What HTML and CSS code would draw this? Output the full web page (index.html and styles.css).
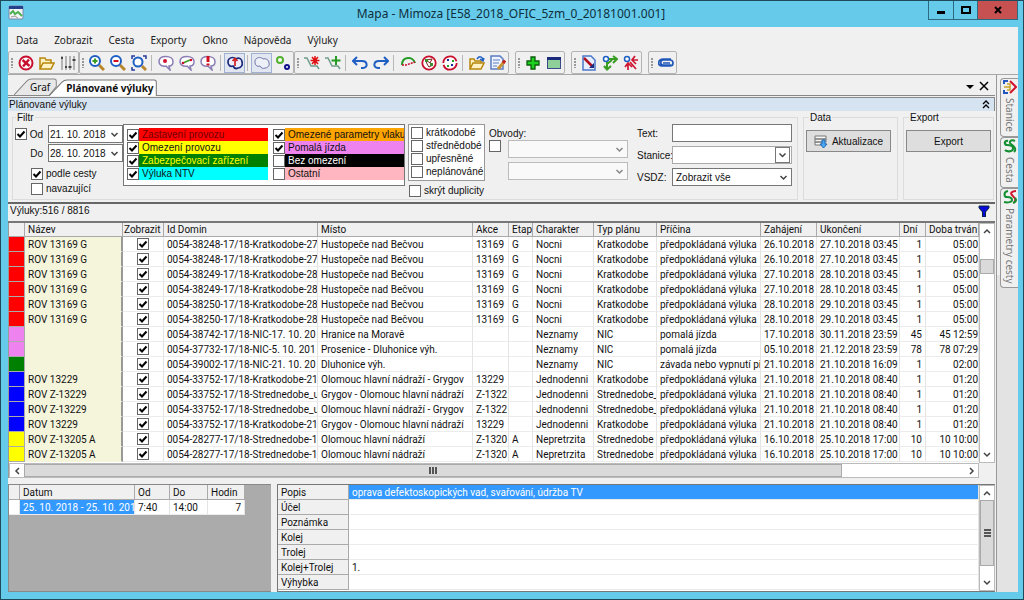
FILE: index.html
```html
<!DOCTYPE html>
<html lang="cs">
<head>
    <meta charset="UTF-8">
    <meta name="viewport" content="width=device-width, initial-scale=1.0">
    <title>Mapa - Mimoza [E58_2018_OFIC_5zm_0_20181001.001]</title>
    <link rel="stylesheet" href="styles.css">
</head>
<body>
<div class="window">

    <header class="titlebar">
        <svg class="app-icon" viewBox="0 0 16 16"><rect x="1" y="1" width="14" height="13" rx="1" fill="#f4f4f4" stroke="#7a86a8"/><path d="M1 1h14v3H1z" fill="#27408b"/><path d="M2 9l3-3 2 3 3-2 4 4" fill="none" stroke="#4caf50" stroke-width="2"/><path d="M3 12l4-1 3 2" fill="none" stroke="#999"/></svg>
        <h1>Mapa - Mimoza [E58_2018_OFIC_5zm_0_20181001.001]</h1>
        <div class="win-buttons">
            <button class="win-min" aria-label="Minimalizovat"><svg viewBox="0 0 10 10"><path d="M1 6h8v3H1z"/></svg></button>
            <button class="win-max" aria-label="Maximalizovat"><svg viewBox="0 0 10 10"><path d="M1 2h8v6H1z" fill="none" stroke="#000" stroke-width="2"/></svg></button>
            <button class="win-close" aria-label="Zavřít"><svg viewBox="0 0 10 10"><path d="M2 2l6 6M8 2l-6 6" stroke="#000" stroke-width="2"/></svg></button>
        </div>
    </header>

    <div class="client">
        <nav class="menu">
            <a href="#">Data</a><a href="#">Zobrazit</a><a href="#">Cesta</a><a href="#">Exporty</a><a href="#">Okno</a><a href="#">Nápověda</a><a href="#">Výluky</a>
        </nav>

        <div class="toolbar">
            <div class="tool-group">
                <span class="grip"></span>
                <button aria-label="Storno"><svg viewBox="0 0 16 16"><circle cx="8" cy="8" r="6.500" fill="#fff" stroke="#c8102e" stroke-width="2"/><path d="M4.500 5l7 6M11 4.500l-6 7" stroke="#c8102e" stroke-width="2.500"/></svg></button>
                <button aria-label="Otevřít"><svg viewBox="0 0 16 16"><path d="M1 14V3h5l1 2h5v3M1 14l3-6h11l-3 6z" fill="#fff3c4" stroke="#b8860b" stroke-width="1.500"/></svg></button>
                <button aria-label="Nastavení"><svg viewBox="0 0 16 16"><path d="M2 1v14M6 1v14M10 1v14M14 1v14" stroke="#777"/><path d="M1 3h2M5 12h2M8.500 12h3M12.500 5h3" stroke="#444" stroke-width="2"/></svg></button>
            </div>
            <div class="tool-group">
                <span class="grip"></span>
                <button aria-label="Přiblížit"><svg viewBox="0 0 16 16"><path d="M10 10l5 5" stroke="#b8862b" stroke-width="3"/><circle cx="6" cy="6" r="5" fill="#fff" stroke="#1f5fc4" stroke-width="2"/><path d="M3.500 6h5M6 3.500v5" stroke="#3a9d23" stroke-width="2"/></svg></button>
                <button aria-label="Oddálit"><svg viewBox="0 0 16 16"><path d="M10 10l5 5" stroke="#b8862b" stroke-width="3"/><circle cx="6" cy="6" r="5" fill="#fff" stroke="#1f5fc4" stroke-width="2"/><path d="M3.500 6h5" stroke="#d01020" stroke-width="2"/></svg></button>
                <button aria-label="Celá mapa"><svg viewBox="0 0 16 16"><path d="M11 11l4 4" stroke="#b8862b" stroke-width="3"/><circle cx="7" cy="7" r="4.500" fill="#fff" stroke="#1f5fc4" stroke-width="2"/><path d="M1 4V1h3M12 1h3v3M1 12v3h3" fill="none" stroke="#223a9a" stroke-width="1.500"/></svg></button>
                <span class="sep"></span>
                <button aria-label="Výběr bodu"><svg viewBox="0 0 16 16"><path d="M9 11C3 12 1 9 1 6.500 1 3 4 1.500 8 1.500s7 2 7 5-2 4.500-4 4.500l1 4-4-4" fill="#fff" stroke="#8c7fb5" stroke-width="1.500"/><circle cx="7" cy="6" r="2" fill="#d01030"/></svg></button>
                <button aria-label="Výběr úseku"><svg viewBox="0 0 16 16"><path d="M9 11C3 12 1 9 1 6.500 1 3 4 1.500 8 1.500s7 2 7 5-2 4.500-4 4.500l1 4-4-4" fill="#fff" stroke="#8c7fb5" stroke-width="1.500"/><path d="M4 8l7-3" stroke="#3a9d23" stroke-width="1.500"/><circle cx="4" cy="8" r="1.300" fill="#d01030"/><circle cx="12" cy="5" r="1.300" fill="#d01030"/></svg></button>
                <button aria-label="Výběr návěsti"><svg viewBox="0 0 16 16"><path d="M9 11C3 12 1 9 1 6.500 1 3 4 1.500 8 1.500s7 2 7 5-2 4.500-4 4.500l1 4-4-4" fill="#fff" stroke="#8c7fb5" stroke-width="1.500"/><path d="M8 1v6M8 8.500v2" stroke="#d01020" stroke-width="3"/></svg></button>
                <span class="sep"></span>
                <button class="pressed" aria-label="Oblast s bodem"><svg viewBox="0 0 16 16"><path d="M2 4c2-2 5-2 7 0 3-2 6 0 6 3 1 3-1 6-4 6-2 1-4 0-5-2-3 1-5-1-5-4 0-1 0-2 1-3z" fill="#eef" stroke="#1b2a7a" stroke-width="1.700"/><path d="M8 11V4M5.500 6L8 3.500 10.500 6" fill="none" stroke="#d02020" stroke-width="1.700"/></svg></button>
                <span class="sep"></span>
                <button class="pressed" aria-label="Oblast"><svg viewBox="0 0 16 16"><path d="M2 4c2-2 5-2 7 0 3-1 6 1 6 4 1 3-2 5-4 5-2 1-4 0-5-2-3 1-5-1-5-4 0-1 0-2 1-3z" fill="#eef0f8" stroke="#6c75a8"/></svg></button>
                <button aria-label="Body"><svg viewBox="0 0 16 16"><circle cx="5" cy="5" r="3" fill="#fff" stroke="#55b030" stroke-width="2"/><circle cx="12" cy="12" r="2" fill="#fff" stroke="#10108c" stroke-width="2"/></svg></button>
            </div>
            <div class="tool-group">
                <span class="grip"></span>
                <button aria-label="Nová trasa"><svg viewBox="0 0 16 16"><path d="M0 3h3l4 8h6l2 3" fill="none" stroke="#6f9c8c" stroke-width="1.500"/><path d="M11 1v9M6.500 5.500h9M8 2l6 7M14 2L8 9" stroke="#e01010" stroke-width="1.500"/></svg></button>
                <button aria-label="Přidat do trasy"><svg viewBox="0 0 16 16"><path d="M0 3h3l4 8h6l2 3" fill="none" stroke="#6f9c8c" stroke-width="1.500"/><path d="M11 1v9M6.500 5.500h9" stroke="#259b25" stroke-width="2"/></svg></button>
                <span class="sep"></span>
                <button aria-label="Zpět"><svg viewBox="0 0 16 16"><path d="M5 2L1 6l4 4M1 6h9c6 0 6 7 1 7H9" fill="none" stroke="#1f5fc4" stroke-width="2"/></svg></button>
                <button aria-label="Znovu"><svg viewBox="0 0 16 16"><path d="M11 2l4 4-4 4M15 6H6c-6 0-6 7-1 7h2" fill="none" stroke="#1f5fc4" stroke-width="2"/></svg></button>
                <span class="sep"></span>
                <button aria-label="Část cesty"><svg viewBox="0 0 16 16"><path d="M2 10c0-9 11-9 13-2" fill="none" stroke="#259b25" stroke-width="2"/><path d="M2 10h4l9-3" fill="none" stroke="#c8102e" stroke-width="1.500" stroke-dasharray="2 1"/></svg></button>
                <button aria-label="Uzly"><svg viewBox="0 0 16 16"><circle cx="8" cy="8" r="6.700" fill="#fff" stroke="#c8102e" stroke-width="1.800"/><path d="M5 5l6-1-2 4 3 2-4 2-2-3zM5 5l4 3" fill="none" stroke="#7a2020"/><path d="M4 4h3v3H4zM9 8h3v3H9z" fill="#3a8d33"/></svg></button>
                <button aria-label="Stanice na cestě"><svg viewBox="0 0 16 16"><circle cx="8" cy="8" r="6.700" fill="#fff" stroke="#c8102e" stroke-width="1.800" stroke-dasharray="19 2"/><path d="M5 4h2v2H5zM9 9h2v2H9z" fill="#1b2a9a"/><path d="M10 5h2v2h-2zM5 10h2v2H5z" fill="#20a020"/></svg></button>
                <span class="sep"></span>
                <button aria-label="Načíst"><svg viewBox="0 0 16 16"><path d="M1 14V4h4l1 2h6v2M1 14l3-6h11l-3 6z" fill="#fff3c4" stroke="#b8860b" stroke-width="1.500"/><path d="M8 4c2-3 5-3 6 1M11 4l3 2 1-3" fill="none" stroke="#1f5fc4" stroke-width="1.500"/></svg></button>
                <button aria-label="Upravit"><svg viewBox="0 0 16 16"><path d="M1 1h9l3 3v10H1z" fill="#eef3ff" stroke="#5b7cc0" stroke-width="1.500"/><path d="M3 5h7M3 8h6M3 11h4" stroke="#5b7cc0"/><path d="M8 14l6-7" stroke="#c99232" stroke-width="3"/><path d="M13 8l2-2.500" stroke="#c02020" stroke-width="3"/></svg></button>
            </div>
            <div class="tool-group apart">
                <span class="grip"></span>
                <button aria-label="Přidat"><svg viewBox="0 0 16 16"><path d="M6 2h4v4h4v4h-4v4H6v-4H2V6h4z" fill="#20d020" stroke="#0b5d0b" stroke-width="1.300"/></svg></button>
                <button aria-label="Okno"><svg viewBox="0 0 16 16"><rect x="1.500" y="2.500" width="13" height="11" fill="#8fd09a" stroke="#3a4a8a"/><path d="M1 2h14v3H1z" fill="#1b2a7a"/></svg></button>
            </div>
            <div class="tool-group apart">
                <span class="grip"></span>
                <button aria-label="Dokument"><svg viewBox="0 0 16 16"><path d="M2 1h8l4 4v10H2z" fill="#e6eeff" stroke="#4c78c8" stroke-width="1.500"/><path d="M3 3l9 9" stroke="#b01020" stroke-width="2.500"/><path d="M13 8v5H8z" fill="#1b2a7a"/></svg></button>
                <button aria-label="Připojit"><svg viewBox="0 0 16 16"><circle cx="4" cy="4" r="2.500" fill="#fff" stroke="#1f5fc4" stroke-width="1.500"/><path d="M7 4h7M11 1l4 3-4 4M5 7v7M2 11l3 3.500L9 11M5 9l5-4" fill="none" stroke="#3a9d23" stroke-width="2"/></svg></button>
                <button aria-label="Odpojit"><svg viewBox="0 0 16 16"><path d="M9 5h6M12 1L9 5l4 4M5 8v7M2 12l3-4 4 4M7 7l6 7" fill="none" stroke="#d01530" stroke-width="1.700"/><circle cx="4" cy="4" r="2.500" fill="#fff" stroke="#1f5fc4" stroke-width="1.500"/></svg></button>
            </div>
            <div class="tool-group apart">
                <span class="grip"></span>
                <button aria-label="Příloha"><svg viewBox="0 0 16 16"><path d="M13 10H5c-3 0-3-5 0-5h7c4 0 4 6 0 6H4c-5 0-4-7 1-7h8M5 8h7" fill="none" stroke="#1f57b8" stroke-width="1.700"/></svg></button>
            </div>
        </div>

        <div class="workspace">
            <main class="document">
                <div class="tabs">
                    <button class="tab tab-graf"><svg viewBox="0 0 44 16" preserveAspectRatio="none"><path d="M0 16L13 3Q15 1 18 1H41Q43 1 43 3V8L36 16" fill="#e8e8e8" stroke="#888"/></svg><span>Graf</span></button>
                    <button class="tab tab-active"><svg viewBox="0 0 108 16" preserveAspectRatio="none"><path d="M0 16L13 3Q15 1 18 1H105Q107 1 107 3V16" fill="#fff" stroke="#777"/></svg><span>Plánované výluky</span></button>
                    <div class="tab-tools">
                        <button aria-label="Seznam oken"><svg viewBox="0 0 10 10"><path d="M1 4h8L5 8z"/></svg></button>
                        <button aria-label="Zavřít okno"><svg viewBox="0 0 10 10"><path d="M1 1l8 8M9 1L1 9" stroke="#000" stroke-width="1.500"/></svg></button>
                    </div>
                </div>

                <div class="panel-title"><span>Plánované výluky</span>
                    <button aria-label="Sbalit"><svg viewBox="0 0 8 10"><path d="M1 5l3-3 3 3M1 9l3-3 3 3" fill="none" stroke="#000" stroke-width="1.300"/></svg></button>
                </div>

                <form class="filter">
                    <fieldset class="box-filter">
                        <legend>Filtr</legend>
                        <div class="dates">
                            <div class="date-row"><label><input type="checkbox" checked>Od</label><input type="text" class="date" value="21. 10. 2018" aria-label="Od"></div>
                            <div class="date-row"><label for="dateTo">Do</label><input type="text" class="date" id="dateTo" value="28. 10. 2018"></div>
                            <label class="date-option"><input type="checkbox" checked>podle cesty</label>
                            <label class="date-option"><input type="checkbox">navazující</label>
                        </div>
                        <div class="kinds">
                            <label><input type="checkbox" checked><span class="kind-stop">Zastavení provozu</span></label>
                            <label><input type="checkbox" checked><span class="kind-limit">Omezení provozu</span></label>
                            <label><input type="checkbox" checked><span class="kind-signal">Zabezpečovací zařízení</span></label>
                            <label><input type="checkbox" checked><span class="kind-ntv">Výluka NTV</span></label>
                            <label><input type="checkbox" checked><span class="kind-params">Omezené parametry vlaku</span></label>
                            <label><input type="checkbox" checked><span class="kind-slow">Pomalá jízda</span></label>
                            <label><input type="checkbox"><span class="kind-none">Bez omezení</span></label>
                            <label><input type="checkbox"><span class="kind-other">Ostatní</span></label>
                        </div>
                        <div class="terms">
                            <div class="term-list">
                                <label><input type="checkbox">krátkodobé</label>
                                <label><input type="checkbox">střednědobé</label>
                                <label><input type="checkbox">upřesněné</label>
                                <label><input type="checkbox">neplánováné</label>
                            </div>
                            <label class="duplicates"><input type="checkbox">skrýt duplicity</label>
                        </div>
                        <div class="districts">
                            <label for="districtOn">Obvody:</label>
                            <div class="district-row"><input type="checkbox" id="districtOn">
                                <div class="district-selects">
                                    <select disabled aria-label="Obvod 1"></select>
                                    <select disabled aria-label="Obvod 2"></select>
                                </div>
                            </div>
                        </div>
                        <div class="fields">
                            <label for="text">Text:</label><input type="text" id="text">
                            <label for="station">Stanice:</label><select id="station" class="station"></select>
                            <label for="vsdz">VSDZ:</label><select id="vsdz"><option>Zobrazit vše</option></select>
                        </div>
                    </fieldset>
                    <fieldset class="box-data">
                        <legend>Data</legend>
                        <button type="button" class="push"><svg viewBox="0 0 14 14"><path d="M1 2h11v3H1zM1 5h11v3H1zM1 8h7v3H1z" fill="#f6f6f6" stroke="#777"/><path d="M8 6h3v4h2l-3.500 4L6 10h2z" fill="#4aa8f0" stroke="#1c68b8"/></svg>Aktualizace</button>
                    </fieldset>
                    <fieldset class="box-export">
                        <legend>Export</legend>
                        <button type="button" class="push">Export</button>
                    </fieldset>
                </form>

                <div class="count-bar"><span>Výluky:516 / 8816</span>
                    <button aria-label="Filtrovat"><svg viewBox="0 0 12 12"><path d="M1 1h10v2L7.500 7v5h-3V7L1 3z" fill="#0808d8" stroke="#0a2a3a"/></svg></button>
                </div>

                <div class="grid-area">
                    <div class="grid-view">
                        <table class="grid closures">
                            <colgroup><col class="c-color"><col class="c-name"><col class="c-show"><col class="c-id"><col><col class="c-action"><col class="c-stage"><col class="c-char"><col class="c-plan"><col class="c-cause"><col class="c-start"><col class="c-end"><col class="c-days"><col class="c-dur"></colgroup>
                            <thead>
                                <tr><th></th><th>Název</th><th>Zobrazit</th><th>Id Domin</th><th>Místo</th><th>Akce</th><th>Etap</th><th>Charakter</th><th>Typ plánu</th><th>Příčina</th><th>Zahájení</th><th>Ukončení</th><th>Dní</th><th>Doba trván</th></tr>
                            </thead>
                            <tbody>
                                <tr class="red"><td></td><td>ROV 13169 G</td><td><input type="checkbox" checked aria-label="Zobrazit"></td><td>0054-38248-17/18-Kratkodobe-27</td><td>Hustopeče nad Bečvou</td><td>13169</td><td>G</td><td>Nocni</td><td>Kratkodobe</td><td>předpokládaná výluka</td><td>26.10.2018</td><td>27.10.2018 03:45</td><td>1</td><td>05:00</td></tr>
                                <tr class="red"><td></td><td>ROV 13169 G</td><td><input type="checkbox" checked aria-label="Zobrazit"></td><td>0054-38248-17/18-Kratkodobe-27</td><td>Hustopeče nad Bečvou</td><td>13169</td><td>G</td><td>Nocni</td><td>Kratkodobe</td><td>předpokládaná výluka</td><td>26.10.2018</td><td>27.10.2018 03:45</td><td>1</td><td>05:00</td></tr>
                                <tr class="red"><td></td><td>ROV 13169 G</td><td><input type="checkbox" checked aria-label="Zobrazit"></td><td>0054-38249-17/18-Kratkodobe-28</td><td>Hustopeče nad Bečvou</td><td>13169</td><td>G</td><td>Nocni</td><td>Kratkodobe</td><td>předpokládaná výluka</td><td>27.10.2018</td><td>28.10.2018 03:45</td><td>1</td><td>05:00</td></tr>
                                <tr class="red"><td></td><td>ROV 13169 G</td><td><input type="checkbox" checked aria-label="Zobrazit"></td><td>0054-38249-17/18-Kratkodobe-28</td><td>Hustopeče nad Bečvou</td><td>13169</td><td>G</td><td>Nocni</td><td>Kratkodobe</td><td>předpokládaná výluka</td><td>27.10.2018</td><td>28.10.2018 03:45</td><td>1</td><td>05:00</td></tr>
                                <tr class="red"><td></td><td>ROV 13169 G</td><td><input type="checkbox" checked aria-label="Zobrazit"></td><td>0054-38250-17/18-Kratkodobe-28</td><td>Hustopeče nad Bečvou</td><td>13169</td><td>G</td><td>Nocni</td><td>Kratkodobe</td><td>předpokládaná výluka</td><td>28.10.2018</td><td>29.10.2018 03:45</td><td>1</td><td>05:00</td></tr>
                                <tr class="red"><td></td><td>ROV 13169 G</td><td><input type="checkbox" checked aria-label="Zobrazit"></td><td>0054-38250-17/18-Kratkodobe-28</td><td>Hustopeče nad Bečvou</td><td>13169</td><td>G</td><td>Nocni</td><td>Kratkodobe</td><td>předpokládaná výluka</td><td>28.10.2018</td><td>29.10.2018 03:45</td><td>1</td><td>05:00</td></tr>
                                <tr class="violet"><td></td><td></td><td><input type="checkbox" checked aria-label="Zobrazit"></td><td>0054-38742-17/18-NIC-17. 10. 20</td><td>Hranice na Moravě</td><td></td><td></td><td>Neznamy</td><td>NIC</td><td>pomalá jízda</td><td>17.10.2018</td><td>30.11.2018 23:59</td><td>45</td><td>45 12:59</td></tr>
                                <tr class="violet"><td></td><td></td><td><input type="checkbox" checked aria-label="Zobrazit"></td><td>0054-37732-17/18-NIC-5. 10. 201</td><td>Prosenice - Dluhonice výh.</td><td></td><td></td><td>Neznamy</td><td>NIC</td><td>pomalá jízda</td><td>05.10.2018</td><td>21.12.2018 23:59</td><td>78</td><td>78 07:29</td></tr>
                                <tr class="green"><td></td><td></td><td><input type="checkbox" checked aria-label="Zobrazit"></td><td>0054-39002-17/18-NIC-21. 10. 20</td><td>Dluhonice výh.</td><td></td><td></td><td>Neznamy</td><td>NIC</td><td>závada nebo vypnutí pi</td><td>21.10.2018</td><td>21.10.2018 16:09</td><td>1</td><td>02:00</td></tr>
                                <tr class="blue"><td></td><td>ROV 13229</td><td><input type="checkbox" checked aria-label="Zobrazit"></td><td>0054-33752-17/18-Kratkodobe-21</td><td>Olomouc hlavní nádraží - Grygov</td><td>13229</td><td></td><td>Jednodenni</td><td>Kratkodobe</td><td>předpokládaná výluka</td><td>21.10.2018</td><td>21.10.2018 08:40</td><td>1</td><td>01:20</td></tr>
                                <tr class="blue"><td></td><td>ROV Z-13229</td><td><input type="checkbox" checked aria-label="Zobrazit"></td><td>0054-33752-17/18-Strednedobe_u</td><td>Grygov - Olomouc hlavní nádraží</td><td>Z-1322</td><td></td><td>Jednodenni</td><td>Strednedobe_</td><td>předpokládaná výluka</td><td>21.10.2018</td><td>21.10.2018 08:40</td><td>1</td><td>01:20</td></tr>
                                <tr class="blue"><td></td><td>ROV Z-13229</td><td><input type="checkbox" checked aria-label="Zobrazit"></td><td>0054-33752-17/18-Strednedobe_u</td><td>Olomouc hlavní nádraží - Grygov</td><td>Z-1322</td><td></td><td>Jednodenni</td><td>Strednedobe_</td><td>předpokládaná výluka</td><td>21.10.2018</td><td>21.10.2018 08:40</td><td>1</td><td>01:20</td></tr>
                                <tr class="blue"><td></td><td>ROV 13229</td><td><input type="checkbox" checked aria-label="Zobrazit"></td><td>0054-33752-17/18-Kratkodobe-21</td><td>Grygov - Olomouc hlavní nádraží</td><td>13229</td><td></td><td>Jednodenni</td><td>Kratkodobe</td><td>předpokládaná výluka</td><td>21.10.2018</td><td>21.10.2018 08:40</td><td>1</td><td>01:20</td></tr>
                                <tr class="yellow"><td></td><td>ROV Z-13205 A</td><td><input type="checkbox" checked aria-label="Zobrazit"></td><td>0054-28277-17/18-Strednedobe-1</td><td>Olomouc hlavní nádraží</td><td>Z-1320</td><td>A</td><td>Nepretrzita</td><td>Strednedobe</td><td>předpokládaná výluka</td><td>16.10.2018</td><td>25.10.2018 17:00</td><td>10</td><td>10 10:00</td></tr>
                                <tr class="yellow"><td></td><td>ROV Z-13205 A</td><td><input type="checkbox" checked aria-label="Zobrazit"></td><td>0054-28277-17/18-Strednedobe-1</td><td>Olomouc hlavní nádraží</td><td>Z-1320</td><td>A</td><td>Nepretrzita</td><td>Strednedobe</td><td>předpokládaná výluka</td><td>16.10.2018</td><td>25.10.2018 17:00</td><td>10</td><td>10 10:00</td></tr>
                            </tbody>
                        </table>
                    </div>
                    <div class="vscroll">
                        <button type="button" aria-label="Nahoru"><svg viewBox="0 0 10 10"><path d="M2 7l3-3 3 3"/></svg></button>
                        <div class="track"><div class="thumb thumb-grid"></div></div>
                        <button type="button" aria-label="Dolů"><svg viewBox="0 0 10 10"><path d="M2 3l3 3 3-3"/></svg></button>
                    </div>
                    <div class="hscroll">
                        <button type="button" aria-label="Vlevo"><svg viewBox="0 0 10 10"><path d="M7 2L4 5l3 3"/></svg></button>
                        <div class="track"><div class="thumb thumb-wide"><i></i><i></i><i></i></div></div>
                        <button type="button" aria-label="Vpravo"><svg viewBox="0 0 10 10"><path d="M4 2l3 3-3 3"/></svg></button>
                    </div>
                </div>

                <div class="details">
                    <div class="terms-grid">
                        <table class="grid times">
                            <colgroup><col class="c-mark"><col class="c-date"><col class="c-from"><col class="c-to"><col class="c-hours"></colgroup>
                            <thead><tr><th></th><th>Datum</th><th>Od</th><th>Do</th><th>Hodin</th></tr></thead>
                            <tbody><tr><td></td><td class="selected">25. 10. 2018 - 25. 10. 201</td><td>7:40</td><td>14:00</td><td>7</td></tr></tbody>
                        </table>
                    </div>
                    <div class="info">
                        <table class="grid properties">
                            <colgroup><col class="c-prop"><col></colgroup>
                            <tbody>
                                <tr><th>Popis</th><td class="selected">oprava defektoskopických vad, svařování, údržba TV</td></tr>
                                <tr><th>Účel</th><td></td></tr>
                                <tr><th>Poznámka</th><td></td></tr>
                                <tr><th>Kolej</th><td></td></tr>
                                <tr><th>Trolej</th><td></td></tr>
                                <tr><th>Kolej+Trolej</th><td>1.</td></tr>
                                <tr><th>Výhybka</th><td></td></tr>
                            </tbody>
                        </table>
                        <div class="vscroll">
                            <button type="button" aria-label="Nahoru"><svg viewBox="0 0 10 10"><path d="M2 7l3-3 3 3"/></svg></button>
                            <div class="track"><div class="thumb thumb-info"><i></i><i></i><i></i></div></div>
                            <button type="button" aria-label="Dolů"><svg viewBox="0 0 10 10"><path d="M2 3l3 3 3-3"/></svg></button>
                        </div>
                    </div>
                </div>
            </main>

            <aside class="side-tabs">
                <button><svg viewBox="0 0 14 14"><path d="M5 1H1v3M1 10v3h4" fill="none" stroke="#2458c0" stroke-width="2"/><path d="M7 1l6 6-6 6" fill="none" stroke="#d01530" stroke-width="2"/><path d="M1 7h6M4 4h3v6H4" fill="none" stroke="#c9a22a" stroke-width="1.500"/></svg><span>Stanice</span></button>
                <button><svg viewBox="0 0 14 14"><path d="M5 2C1 1 1 6 4 6s7 1 6 4-6 3-8 1" fill="none" stroke="#159030" stroke-width="2.200"/><path d="M12 2C8 0 5 3 8 5s6 5 3 8" fill="none" stroke="#159030" stroke-width="2"/></svg><span>Cesta</span></button>
                <button><svg viewBox="0 0 14 14"><path d="M5 1C0 2 1 7 4 7s5 1 5 3-4 3-8 2" fill="none" stroke="#159030" stroke-width="2"/><path d="M13 1C9 1 7 3 9 5s5 4 2 8" fill="none" stroke="#d01530" stroke-width="2"/><path d="M12 8c2 2 1 4-2 5" fill="none" stroke="#159030" stroke-width="2"/></svg><span>Parametry cesty</span></button>
            </aside>
        </div>
    </div>
</div>
</body>
</html>
```
FILE: styles.css
```css
* {
    box-sizing: border-box;
}
body {
    margin: 0;
    font-family: "Liberation Sans", Arial, sans-serif;
    font-size: 10px;
    line-height: 13px;
    color: #111;
}
button, input, select {
    font: inherit;
    color: inherit;
    margin: 0;
    padding: 0;
    border-radius: 0;
}
button {
    border: none;
    background: none;
    display: flex;
    align-items: center;
    justify-content: center;
}
svg {
    display: block;
    flex: none;
}
label {
    display: flex;
    align-items: center;
    white-space: nowrap;
}

/* window frame */
.window {
    height: 100vh;
    min-height: 500px;
    display: flex;
    flex-direction: column;
    background-color: #66cbea;
    border: 1px solid #1f4a5c;
    padding: 0 5px 7px 7px;
}
.titlebar {
    display: flex;
    height: 26px;
    flex: none;
}
.app-icon {
    width: 16px;
    height: 16px;
    margin-top: 4px;
}
.titlebar h1 {
    flex: 1;
    margin: 0;
    padding-left: 70px;
    text-align: center;
    font: 12px/26px "Noto Sans", "Open Sans", sans-serif;
    color: #0e2f3d;
}
.win-buttons {
    display: flex;
    height: 19px;
    border: 1px solid #2c6a80;
    border-top: none;
}
.win-buttons button {
    width: 24px;
}
.win-buttons button + button {
    border-left: 1px solid #2c6a80;
}
.win-buttons .win-close {
    width: 40px;
    background-color: #c75050;
}
.win-buttons svg {
    width: 10px;
    height: 10px;
}
.client {
    flex: 1;
    min-height: 0;
    display: flex;
    flex-direction: column;
    background-color: #f0f0f0;
}

/* menu and toolbar */
.menu {
    display: flex;
    gap: 16px;
    height: 24px;
    flex: none;
    padding-left: 8px;
    font: 10px/26px "Noto Sans", "Open Sans", sans-serif;
}
.menu a {
    color: #222;
    text-decoration: none;
}
.toolbar {
    display: flex;
    height: 24px;
    flex: none;
    border-bottom: 1px solid #a8a8a8;
}
.tool-group {
    display: flex;
    align-items: center;
    border: 1px solid #b4b4b4;
    border-radius: 2px;
}
.tool-group.apart {
    margin-left: 6px;
}
.grip {
    width: 6px;
    height: 11px;
    background: radial-gradient(circle at 3px 2px, #999 1px, transparent 1px) 0 0 / 6px 3px;
}
.tool-group button {
    width: 21px;
    height: 20px;
}
.tool-group svg {
    width: 16px;
    height: 16px;
}
.tool-group .pressed {
    border: 1px solid #9fb2d4;
    background-color: #e2e6f0;
}
.sep {
    width: 1px;
    height: 16px;
    margin: 0 3px 0 2px;
    background-color: #b8b8b8;
}

/* document tabs */
.workspace {
    flex: 1;
    min-height: 0;
    display: flex;
}
.document {
    flex: 1;
    min-width: 0;
    display: flex;
    flex-direction: column;
    border-right: 1px solid #999;
    padding-right: 1px;
}
.tabs {
    display: flex;
    align-items: flex-end;
    height: 21px;
    flex: none;
    padding-left: 6px;
    border-bottom: 1px solid #888;
    font: 10px/14px "Noto Sans", "Open Sans", sans-serif;
}
.tab {
    position: relative;
    height: 17px;
    padding: 0 7px 0 16px;
}
.tab svg {
    position: absolute;
    left: 0;
    top: 0;
    width: 100%;
    height: 100%;
}
.tab span {
    position: relative;
}
.tab-active {
    margin-left: -8px;
    margin-bottom: -1px;
    padding: 0 4px 0 17px;
    font-weight: bold;
}
.tab-tools {
    display: flex;
    gap: 4px;
    margin-left: auto;
    padding: 0 6px 4px 0;
}
.tab-tools svg {
    width: 10px;
    height: 10px;
}
.panel-title {
    display: flex;
    justify-content: space-between;
    align-items: center;
    height: 14px;
    flex: none;
    margin-top: 1px;
    padding: 0 4px 1px 1px;
    background-color: #d6e3f0;
    border: 1px solid #888;
    border-width: 1px 1px 0 0;
}
.panel-title svg {
    width: 8px;
    height: 10px;
}

/* filter */
.filter {
    display: flex;
    height: 93px;
    flex: none;
    gap: 5px;
    padding: 0 1px 2px 4px;
    border-bottom: 2px solid #666;
}
fieldset {
    min-width: 0;
    margin: 0;
    padding: 0;
    border: 1px solid #dcdcdc;
}
legend {
    margin-left: 3px;
    padding: 0 1px;
}
.box-filter {
    flex: 1;
    display: flex;
    align-items: flex-start;
}
.box-data {
    width: 95px;
    padding: 6px 6px 6px 2px;
}
.box-export {
    width: 91px;
    padding: 6px 2px;
}
.push {
    width: 100%;
    height: 22px;
    gap: 4px;
    background-color: #dedede;
    border: 1px solid #888;
}
.push svg {
    width: 14px;
    height: 14px;
}
input[type="checkbox"] {
    appearance: none;
    flex: none;
    width: 12px;
    height: 12px;
    background: #fff center no-repeat;
    border: 1px solid #666;
}
input[type="checkbox"]:checked {
    background-image: url("data:image/svg+xml,%3Csvg xmlns='http://www.w3.org/2000/svg' width='10' height='10'%3E%3Cpath d='M1.500 5l2.500 2.500L8.500 2.500' fill='none' stroke='black' stroke-width='2'/%3E%3C/svg%3E");
}
input[type="text"], select {
    width: 100%;
    height: 18px;
    padding: 0 3px;
    border: 1px solid #777;
    background-color: #fff;
}
select, .dates .date {
    appearance: none;
    background: #fff url("data:image/svg+xml,%3Csvg xmlns='http://www.w3.org/2000/svg' width='9' height='9'%3E%3Cpath d='M1.500 3l3 3 3-3' fill='none' stroke='%23444' stroke-width='1.500'/%3E%3C/svg%3E") right 3px center no-repeat;
}
select:disabled {
    border-color: #999;
    opacity: 0.6;
}
.dates {
    width: 110px;
    padding-left: 1px;
}
.date-row {
    display: flex;
    justify-content: space-between;
    padding-top: 1px;
}
.date-row label {
    gap: 3px;
    margin-left: auto;
    padding-right: 5px;
}
.dates .date {
    width: 75px;
    padding: 0 1px;
}
.date-option {
    gap: 3px;
    height: 15px;
    padding-left: 17px;
}
.date-row + .date-option {
    margin-top: 4px;
}
.kinds {
    display: grid;
    grid-auto-flow: column;
    grid-template-rows: repeat(4, 13px);
    grid-template-columns: 141px 132px;
    column-gap: 5px;
    width: 282px;
    height: 62px;
    padding: 3px 0 0 3px;
    overflow: hidden;
    background-color: #fff;
    border: 1px solid #777;
}
.kinds label {
    overflow: hidden;
}
.kinds span {
    flex: 1;
    padding-left: 3px;
    overflow: hidden;
}
.kind-stop { background-color: #f00; color: #700000; }
.kind-limit { background-color: #ff0; }
.kind-signal { background-color: #008000; color: #ff0; }
.kind-ntv { background-color: #0ff; }
.kind-params { background-color: #ffa500; }
.kind-slow { background-color: #ee82ee; }
.kind-none { background-color: #000; color: #fff; }
.kind-other { background-color: #ffb6c1; }
.terms {
    width: 77px;
    margin-left: 3px;
}
.term-list {
    height: 57px;
    padding: 1px 2px;
    background-color: #fff;
    border: 1px solid #999;
}
.terms label {
    gap: 3px;
}
.duplicates {
    margin-top: 3px;
    padding-left: 1px;
}
.districts {
    width: 140px;
    margin: 3px 0 0 4px;
}
.district-row {
    display: flex;
    gap: 7px;
}
.district-selects {
    display: grid;
    gap: 4px;
    width: 120px;
}
.fields {
    display: grid;
    grid-template-columns: 35px 1fr;
    row-gap: 4px;
    flex: 1;
    margin: 0 5px 0 8px;
}
.fields .station {
    background-image: url("data:image/svg+xml,%3Csvg xmlns='http://www.w3.org/2000/svg' width='15' height='16'%3E%3Crect x='0.500' y='0.500' width='14' height='15' fill='white' stroke='%23777'/%3E%3Cpath d='M4.500 6.500l3 3 3-3' fill='none' stroke='%23444' stroke-width='1.500'/%3E%3C/svg%3E");
    background-position: right 1px center;
    border-color: #aaa;
}

/* counter */
.count-bar {
    display: flex;
    justify-content: space-between;
    align-items: center;
    height: 19px;
    flex: none;
    padding: 0 5px 3px 2px;
    border-bottom: 2px solid #777;
    line-height: 14px;
}
.count-bar svg {
    width: 12px;
    height: 12px;
}

/* tables */
.grid {
    width: 100%;
    table-layout: fixed;
    border-collapse: separate;
    border-spacing: 0;
    background-color: #fff;
    font-family: Roboto, "Liberation Sans", sans-serif;
}
.grid th, .grid td {
    height: 15px;
    padding: 0 0 0 3px;
    overflow: hidden;
    white-space: nowrap;
    text-align: left;
    font-weight: normal;
    line-height: 13px;
    border-right: 1px solid #e4e4e4;
    border-bottom: 1px solid #ececec;
}
.grid th {
    background-color: #f0f0f0;
    border-color: #aaa;
}
.grid .selected {
    background-color: #3399ff;
    color: #fff;
}
.grid-area {
    flex: 1;
    min-height: 0;
    display: grid;
    grid-template-columns: 1fr 16px;
    grid-template-rows: 1fr 15px;
    border-left: 1px solid #999;
}
.grid-view {
    overflow: hidden;
    background-color: #fff;
}
.c-color { width: 16px; }
.c-name { width: 98px; }
.c-show { width: 41px; }
.c-id { width: 154px; }
.c-action { width: 36px; }
.c-stage { width: 24px; }
.c-char { width: 61px; }
.c-plan { width: 63px; }
.c-cause { width: 104px; }
.c-start { width: 56px; }
.c-end { width: 83px; }
.c-days { width: 26px; }
.c-dur { width: 53px; }
.closures th {
    height: 14px;
}
.closures td:nth-child(2) {
    background-color: #f5f5dc;
    border-right: 2px solid #999;
    border-bottom-color: #f5f5dc;
}
.closures td:nth-child(3) {
    padding: 0;
    text-align: center;
}
.closures th:nth-child(3) {
    padding-left: 1px;
}
.closures td input {
    display: block;
    margin: 0 auto;
}
.closures td:nth-child(13) {
    padding-right: 3px;
    text-align: right;
}
.closures td:nth-child(14) {
    text-align: right;
}
.closures td:first-child {
    border-color: #aaa;
}
.red td:first-child { background-color: #f00; }
.violet td:first-child { background-color: #ee82ee; }
.green td:first-child { background-color: #008000; }
.blue td:first-child { background-color: #00f; }
.yellow td:first-child { background-color: #ff0; }

/* scrollbars */
.vscroll, .hscroll {
    display: flex;
    background-color: #fff;
    border: 1px solid #bbb;
}
.vscroll {
    flex-direction: column;
    width: 16px;
}
.vscroll button, .hscroll button {
    width: 14px;
    height: 14px;
    flex: none;
}
.vscroll svg, .hscroll svg {
    width: 10px;
    height: 10px;
    fill: none;
    stroke: #444;
    stroke-width: 1.5;
}
.track {
    flex: 1;
    display: flex;
    flex-direction: inherit;
}
.thumb {
    display: flex;
    align-items: center;
    justify-content: center;
    gap: 1px;
    background-color: #dadada;
    border: 1px solid #aaa;
}
.vscroll .thumb {
    flex-direction: column;
}
.thumb-grid {
    height: 15px;
    margin-top: 21px;
}
.thumb-wide {
    width: 87%;
}
.thumb-info {
    height: 87%;
}
.thumb i {
    background-color: #555;
}
.hscroll i {
    width: 2px;
    height: 7px;
}
.vscroll i {
    width: 7px;
    height: 2px;
}

/* details */
.details {
    display: flex;
    gap: 6px;
    height: 108px;
    flex: none;
    margin-top: 6px;
}
.terms-grid {
    width: 263px;
    background-color: #ababab;
    border: 1px solid #888;
    border-right: none;
}
.times {
    width: 236px;
}
.c-mark { width: 11px; }
.c-date { width: 115px; }
.c-from { width: 35px; }
.c-to { width: 38px; }
.c-hours { width: 37px; }
.times tr > :last-child {
    padding-right: 3px;
}
.times td:last-child {
    text-align: right;
}
.info {
    flex: 1;
    min-width: 0;
    display: flex;
    align-items: flex-start;
    overflow: hidden;
    background-color: #fff;
    border: 1px solid #777;
    border-right: none;
}
.info .vscroll {
    height: 100%;
    flex: none;
}
.c-prop { width: 71px; }

/* side tabs */
.side-tabs {
    width: 21px;
    padding: 3px 0 0 3px;
    background: linear-gradient(#f0f0f0 200px, #e3e3e3 200px);
}
.side-tabs button {
    flex-direction: column;
    gap: 4px;
    width: 18px;
    padding: 1px 0 4px;
    border: 1px solid #999;
    border-right: none;
    border-radius: 4px 0 0 4px;
    background-color: #f0f0f0;
    color: #777;
    font: 10px/14px "Noto Sans", "Open Sans", sans-serif;
}
.side-tabs svg {
    width: 14px;
    height: 14px;
}
.side-tabs span {
    writing-mode: vertical-rl;
}
```
